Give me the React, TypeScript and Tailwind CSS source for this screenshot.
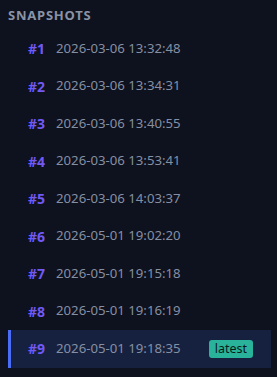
const snapshots = [
  { id: 1, time: "2026-03-06 13:32:48" },
  { id: 2, time: "2026-03-06 13:34:31" },
  { id: 3, time: "2026-03-06 13:40:55" },
  { id: 4, time: "2026-03-06 13:53:41" },
  { id: 5, time: "2026-03-06 14:03:37" },
  { id: 6, time: "2026-05-01 19:02:20" },
  { id: 7, time: "2026-05-01 19:15:18" },
  { id: 8, time: "2026-05-01 19:16:19" },
  { id: 9, time: "2026-05-01 19:18:35" },
]

export default function App() {
  const latest = snapshots[snapshots.length - 1].id
  return (
    <div className="w-[277px] h-[377px] bg-[#0e111e] overflow-hidden" style={{ fontFamily: '"Noto Sans", "Open Sans", sans-serif' }}>
      <div className="pl-2 pt-[5px] text-[13px] font-bold tracking-[0.06em] text-[#8a93a6] leading-[20px]">SNAPSHOTS</div>
      <div className="flex flex-col pl-2 pr-[6px] pt-[5px]">
        {snapshots.map((s) => {
          const isLatest = s.id === latest
          return (
            <div
              key={s.id}
              className={`flex items-center h-[37.5px] pr-[18px] ${isLatest ? "bg-[#16213f] border-l-[3px] border-[#4a6cf7] pl-[17px]" : "pl-5"}`}
            >
              <span className="w-[28px] text-[14px] font-bold text-[#7059f5]">#{s.id}</span>
              <span className="text-[13.2px] text-[#858fa3]">{s.time}</span>
              {isLatest && (
                <span className="ml-auto h-[18px] px-[6px] rounded-[3px] bg-[#29b39b] text-[#0b1a1a] text-[12.5px] leading-[18px]">latest</span>
              )}
            </div>
          )
        })}
      </div>
    </div>
  )
}
